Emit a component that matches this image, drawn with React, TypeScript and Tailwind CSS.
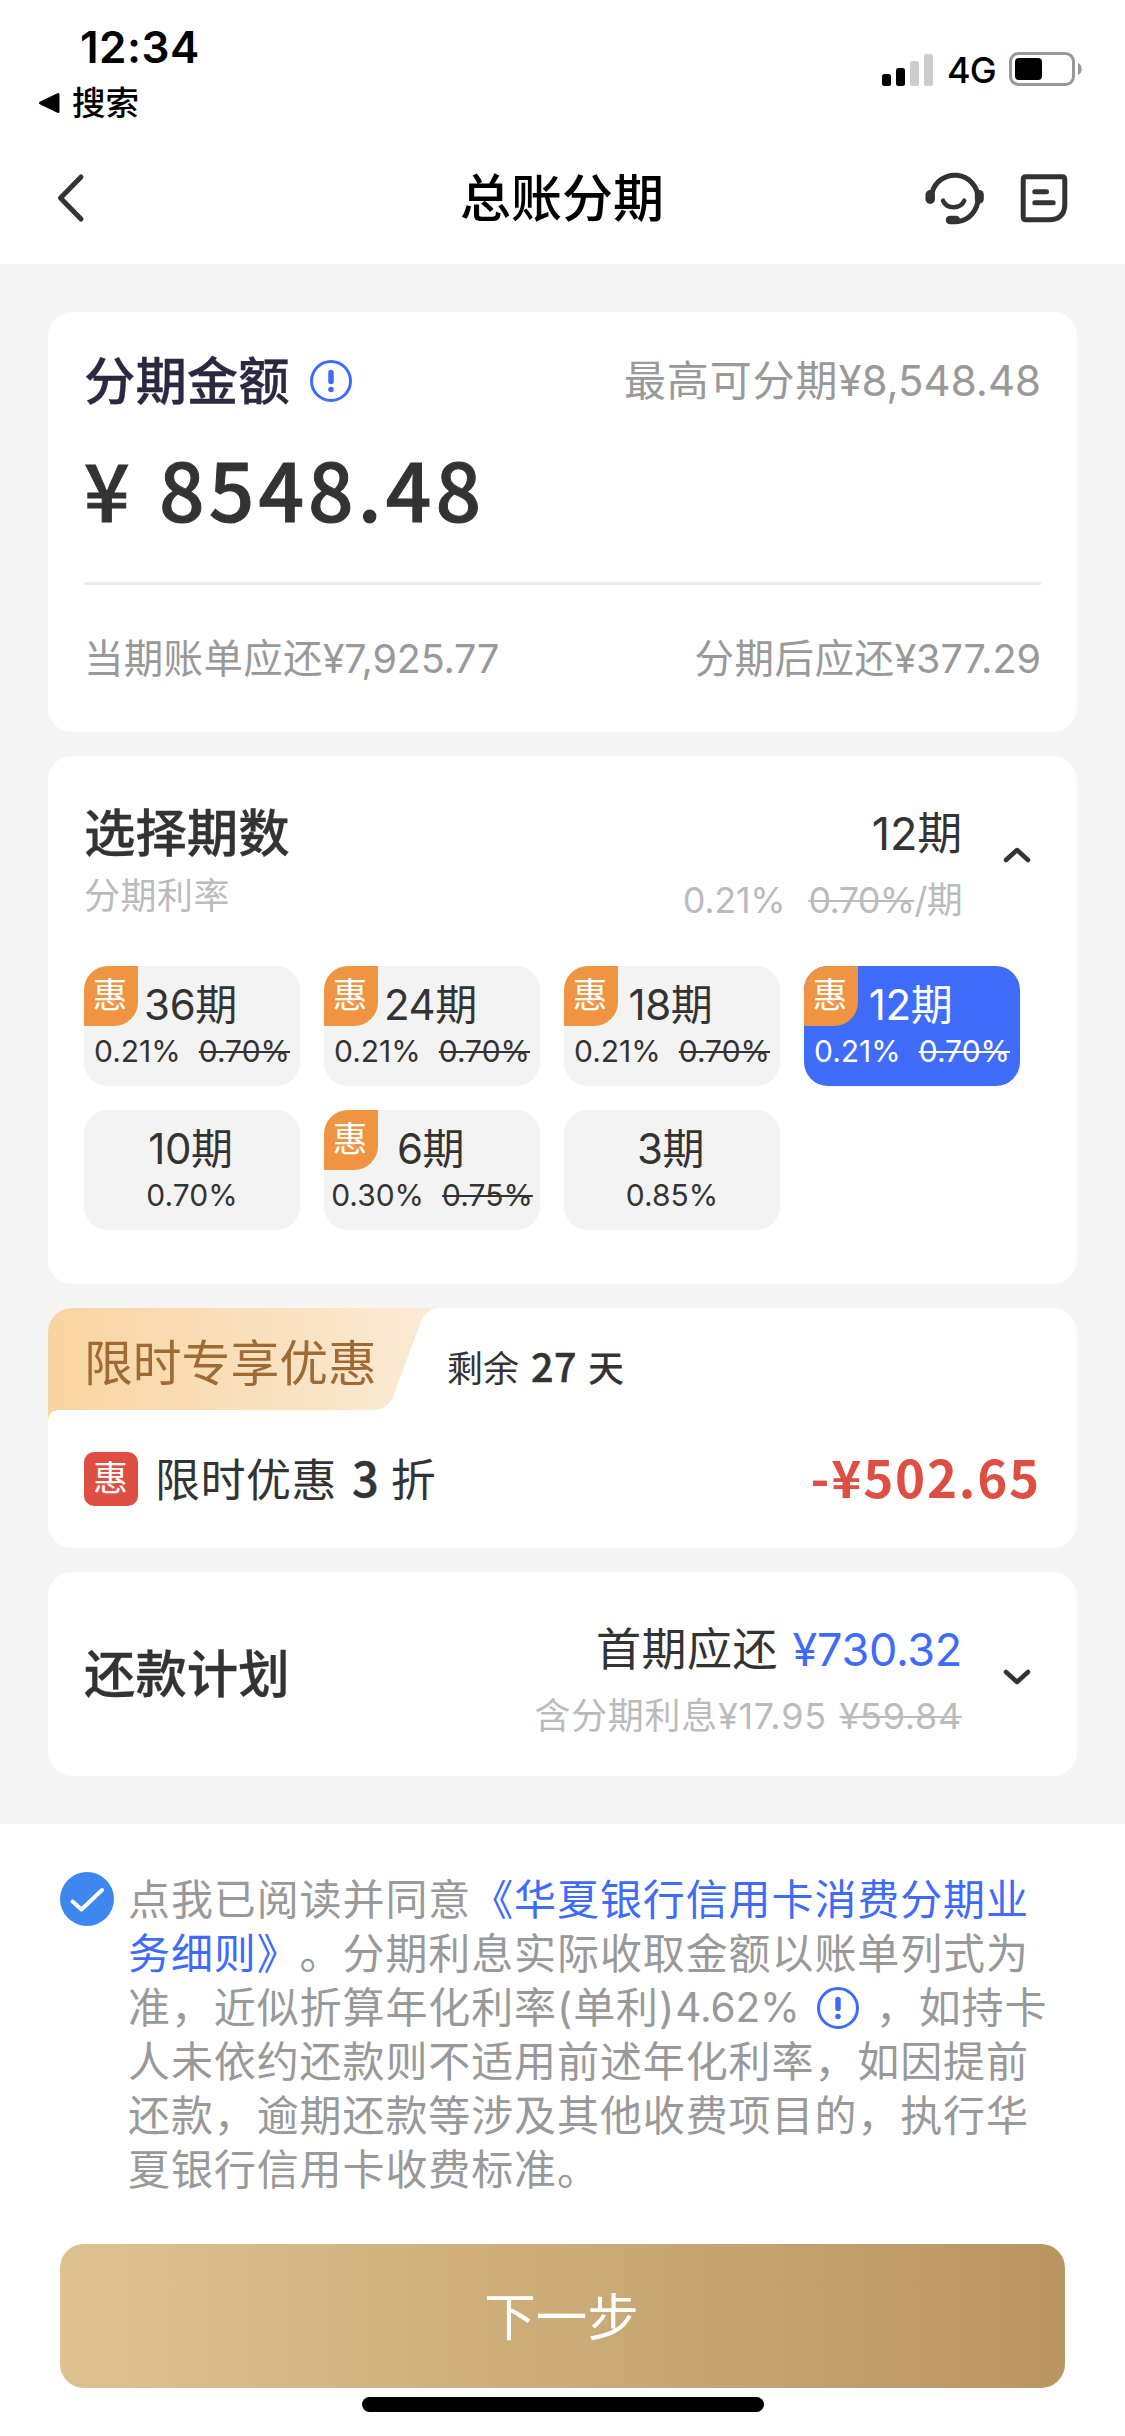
import React from 'react';

type Plan = { term: string; rate: string; was?: string; active?: boolean };

const plans: Plan[] = [
  { term: '36期', rate: '0.21%', was: '0.70%' },
  { term: '24期', rate: '0.21%', was: '0.70%' },
  { term: '18期', rate: '0.21%', was: '0.70%' },
  { term: '12期', rate: '0.21%', was: '0.70%', active: true },
  { term: '10期', rate: '0.70%' },
  { term: '6期', rate: '0.30%', was: '0.75%' },
  { term: '3期', rate: '0.85%' },
];

function StatusBar() {
  return (
    <div className="flex h-[132px] justify-between text-black">
      <div className="pl-[38px] pt-[20px]">
        <div className="pl-[42px] text-[44px] font-semibold leading-[54px] tracking-[0.5px]">12:34</div>
        <div className="mt-[2px] flex h-[54px] items-center gap-[12px] text-[33.5px] font-medium">
          <svg width="22" height="22" viewBox="0 0 22 22">
            <path d="M2.5 11 L20 2.5 V19.5 Z" fill="#000" stroke="#000" strokeWidth="3" strokeLinejoin="round" />
          </svg>
          <span className="leading-[54px]">搜索</span>
        </div>
      </div>
      <div className="mr-[42px] mt-[48px] flex h-[42px] items-center">
        <svg width="52" height="34" viewBox="0 0 52 34">
          <rect x="0" y="22" width="9" height="12" rx="2.5" fill="#000" />
          <rect x="14" y="16" width="9" height="18" rx="2.5" fill="#000" />
          <rect x="28" y="9" width="9" height="25" rx="2.5" fill="#ccc" />
          <rect x="42" y="2" width="9" height="32" rx="2.5" fill="#ccc" />
        </svg>
        <span className="ml-[13px] mt-[2px] w-[49px] text-[36px] font-medium leading-[42px] tracking-[-1px]">4G</span>
        <svg className="ml-[13px]" width="74" height="36" viewBox="0 0 74 36">
          <rect x="1.5" y="2.5" width="63" height="31" rx="8" fill="none" stroke="#999" strokeWidth="3" />
          <rect x="6" y="7" width="27" height="22" rx="4" fill="#000" />
          <path d="M69 12 C74 14 74 22 69 24 Z" fill="#999" />
        </svg>
      </div>
    </div>
  );
}

function NavBar() {
  return (
    <div className="flex h-[132px] items-center justify-between px-[54px]">
      <svg className="mr-[116px]" width="36" height="54" viewBox="0 0 36 54">
        <path d="M27 6 L6.500 27 L27 48" fill="none" stroke="#333" strokeWidth="5" strokeLinecap="round" strokeLinejoin="round" />
      </svg>
      <h1 className="mt-[2px] text-[51px] font-medium leading-[60px] text-black">总账分期</h1>
      <div className="flex items-center gap-[33px]">
        <svg width="66" height="60" viewBox="0 0 66 60" fill="none" stroke="#333" strokeLinecap="round">
          <path d="M14 25 A23.300 23.300 0 1 1 40 53.500" strokeWidth="5" />
          <path d="M12.200 26.800 V31.200" strokeWidth="9.500" />
          <path d="M61.300 26.500 V31" strokeWidth="9" />
          <path d="M25 32.700 C29 41.400 42.500 41.400 46.300 32.700" strokeWidth="4.500" />
          <path d="M32 52 H38" strokeWidth="8.500" />
        </svg>
        <svg width="54" height="60" viewBox="0 0 54 60" fill="none" stroke="#333" strokeLinecap="round" strokeLinejoin="round">
          <path d="M9 8.700 H45 Q47.800 8.700 47.800 11.500 V36 Q47.800 51.800 32 51.800 H9 Q6.200 51.800 6.200 49 V11.500 Q6.200 8.700 9 8.700 Z" strokeWidth="5" />
          <path d="M17.800 23.700 H29.500" strokeWidth="5" />
          <path d="M17.800 34.700 H36.200" strokeWidth="5" />
        </svg>
      </div>
    </div>
  );
}

function InfoIcon({ className = '' }: { className?: string }) {
  return (
    <svg className={className} width="42" height="42" viewBox="0 0 42 42" fill="none">
      <circle cx="21" cy="21" r="19.500" stroke="#3f6bfb" strokeWidth="3" />
      <path d="M21 12.500 V21.500" stroke="#3f6bfb" strokeWidth="5.500" strokeLinecap="round" />
      <circle cx="21" cy="29.500" r="2.800" fill="#3f6bfb" />
    </svg>
  );
}

function Chevron({ up = false }: { up?: boolean }) {
  return (
    <svg width="30" height="18" viewBox="0 0 30 18">
      <path
        d={up ? 'M4 14 L15 4 L26 14' : 'M4 4 L15 14 L26 4'}
        fill="none"
        stroke="#333"
        strokeWidth="4.500"
        strokeLinecap="round"
        strokeLinejoin="round"
      />
    </svg>
  );
}

function AmountCard() {
  return (
    <section className="h-[420px] rounded-[24px] bg-white px-[36px] pt-[39px]">
      <div className="flex h-[60px] items-center justify-between">
        <div className="flex items-center">
          <h2 className="text-[51.400px] font-medium leading-[60px] text-[#2b2840] [-webkit-text-stroke:0.300px]">分期金额</h2>
          <InfoIcon className="ml-[20px]" />
        </div>
        <span className="text-[42px] leading-[60px] text-[#999]">
          <span className="tracking-[0.900px]">最高可分期</span>¥8,548.48
        </span>
      </div>
      <div className="mt-[26px] flex h-[100px] items-center text-[80px] font-medium leading-[100px] text-[#333] [-webkit-text-stroke:1px] [font-family:'Noto_Sans_CJK_SC',sans-serif]">
        <span className="w-[75px]">¥</span>
        <span className="tracking-[4.100px]">8548.48</span>
      </div>
      <div className="mt-[45px] h-[3px] bg-[#ebebeb]" />
      <div className="mt-[44px] flex justify-between text-[39.500px] leading-[60px] text-[#999]">
        <span>
          <span className="tracking-[0.300px]">当期账单应还</span>
          <span className="tracking-[-0.200px]">¥7,925.77</span>
        </span>
        <span>
          <span className="tracking-[0.500px]">分期后应还</span>¥377.29
        </span>
      </div>
    </section>
  );
}

function PlanTile({ plan }: { plan: Plan }) {
  return (
    <div
      className={`relative flex h-[120px] w-[216px] flex-col items-center overflow-hidden rounded-[24px] ${
        plan.active ? 'bg-[#3f6cf9] text-white' : 'bg-[#f3f3f3] text-[#333]'
      }`}
    >
      {plan.was && (
        <span className="absolute left-0 top-0 h-[60px] w-[54px] rounded-br-[24px] bg-[#ef9440] pr-[2px] text-center text-[35px] leading-[58px] text-white">
          惠
        </span>
      )}
      <div className="mt-[12px] pr-[3px] text-[42px] leading-[54px] tracking-[-0.400px]">{plan.term}</div>
      <div className="mt-[-2px] flex gap-[18px] whitespace-nowrap text-[30px] leading-[42px]">
        <span>{plan.rate}</span>
        {plan.was && <span className="line-through decoration-2">{plan.was}</span>}
      </div>
    </div>
  );
}

function TermCard() {
  return (
    <section className="h-[528px] rounded-[24px] bg-white px-[36px]">
      <div className="flex h-[210px] justify-between">
        <div className="pt-[47px]">
          <h2 className="text-[51.400px] font-medium leading-[60px] text-[#333] [-webkit-text-stroke:0.300px]">选择期数</h2>
          <p className="mt-[3px] text-[36px] leading-[60px] tracking-[0.500px] text-[#bbb]">分期利率</p>
        </div>
        <div className="flex">
          <div className="pt-[48px] text-right">
            <p className="text-[45px] leading-[60px] tracking-[-0.200px] text-[#333]">12期</p>
            <p className="mt-[6px] flex justify-end gap-[23px] text-[36px] leading-[60px] tracking-[-0.700px] text-[#bbb]">
              <span className="tracking-[-0.300px]">0.21%</span>
              <span>
                <span className="line-through decoration-2">0.70%</span>/期
              </span>
            </p>
          </div>
          <div className="ml-[40px] mr-[9px] pt-[90px]">
            <Chevron up />
          </div>
        </div>
      </div>
      <div className="flex flex-wrap gap-[24px]">
        {plans.map((p) => (
          <PlanTile key={p.term} plan={p} />
        ))}
      </div>
    </section>
  );
}

function OfferCard() {
  return (
    <section className="relative h-[240px] overflow-hidden rounded-[24px] bg-white">
      <svg className="absolute left-0 top-0" width="400" height="120" viewBox="0 0 400 120">
        <defs>
          <linearGradient id="ribbon" x1="0" y1="0" x2="1" y2="0">
            <stop offset="0" stopColor="#f8d4a0" />
            <stop offset="1" stopColor="#fbebd6" />
          </linearGradient>
        </defs>
        <path
          d="M0 0 H392 C381 0 376 6 372.500 15 L345 89 Q339 102 324 102 H12 Q0 102 0 114 Z"
          fill="url(#ribbon)"
        />
      </svg>
      <div className="relative flex h-[102px] items-center pl-[36px]">
        <span className="mt-[9px] w-[363px] text-[48.800px] leading-[72px] text-[#a06a35]">限时专享优惠</span>
        <span className="mt-[15px] flex items-baseline whitespace-nowrap text-[36px] leading-[54px] text-[#333]">
          <span>剩余</span>
          <span className="ml-[12px] text-[39.500px] font-medium tracking-[0.500px] [-webkit-text-stroke:0.500px] [font-family:'Noto_Sans_CJK_SC',sans-serif]">27</span>
          <span className="ml-[11px] font-medium">天</span>
        </span>
      </div>
      <div className="flex h-[138px] items-center justify-between px-[36px]">
        <div className="flex items-center">
          <span className="h-[54px] w-[54px] rounded-[10px] bg-[#df4e42] pr-[1px] text-center text-[35px] leading-[52px] text-white">惠</span>
          <span className="ml-[17px] flex items-baseline text-[45px] leading-[60px] text-[#333]">
            <span className="tracking-[0.500px]">限时优惠</span>
            <span className="mb-[2px] ml-[15px] text-[47px] font-medium leading-[60px] [-webkit-text-stroke:0.500px] [font-family:'Noto_Sans_CJK_SC',sans-serif]">3</span>
            <span className="ml-[12px]">折</span>
          </span>
        </div>
        <span className="mb-[6px] text-[51px] font-bold leading-[60px] tracking-[1.800px] text-[#df4e42] [font-family:'Noto_Sans_CJK_SC',sans-serif]">-¥502.65</span>
      </div>
    </section>
  );
}

function RepaymentCard() {
  return (
    <section className="flex h-[204px] items-center justify-between rounded-[24px] bg-white px-[36px]">
      <h2 className="text-[51.400px] font-medium leading-[60px] text-[#333] [-webkit-text-stroke:0.300px]">还款计划</h2>
      <div className="flex items-center">
        <div className="pt-[17px] text-right">
          <p className="mr-[-1px] text-[45px] leading-[60px] text-[#333]">
            <span className="mr-[2px] tracking-[0.500px]">首期应还</span>{' '}
            <span className="tracking-[-0.300px] text-[#3f6bfb]">¥730.32</span>
          </p>
          <p className="mr-[-1px] mt-[6px] text-[36px] leading-[60px] tracking-[0.700px] text-[#bbb]">
            含分期利息¥17.95 <span className="ml-[2px] line-through decoration-2">¥59.84</span>
          </p>
        </div>
        <div className="ml-[41px] mr-[9px] flex pt-[5px]">
          <Chevron />
        </div>
      </div>
    </section>
  );
}

function Agreement() {
  return (
    <div className="flex pl-[60px]">
      <svg className="shrink-0" width="54" height="54" viewBox="0 0 54 54">
        <circle cx="27" cy="27" r="27" fill="#3e87ef" />
        <path d="M12.500 29.500 L21.500 37.500 L42 18" fill="none" stroke="#fff" strokeWidth="4" strokeLinecap="round" strokeLinejoin="round" />
      </svg>
      <div className="ml-[14px] mt-[1px] whitespace-nowrap text-[42px] leading-[54px] tracking-[0.900px] text-[#999] [text-spacing-trim:space-all]">
        <div>
          点我已阅读并同意<span className="text-[#3f6bfb]">《华夏银行信用卡消费分期业</span>
        </div>
        <div>
          <span className="text-[#3f6bfb]">务细则》</span>。分期利息实际收取金额以账单列式为
        </div>
        <div className="flex h-[54px] items-center">
          <span>准，近似折算年化利率(单利)</span>
          <span className="text-[40.500px]  tracking-[-0.100px]">4.62%</span>
          <InfoIcon className="mx-[17px]" />
          <span>，如持卡</span>
        </div>
        <div>人未依约还款则不适用前述年化利率，如因提前</div>
        <div>还款，逾期还款等涉及其他收费项目的，执行华</div>
        <div>夏银行信用卡收费标准。</div>
      </div>
    </div>
  );
}

export default function App() {
  return (
    <div
      lang="zh-CN"
      className="flex h-[2436px] w-[1125px] flex-col overflow-hidden bg-white [font-family:'Inter','Noto_Sans_CJK_SC',sans-serif]"
    >
      <header>
        <StatusBar />
        <NavBar />
      </header>
      <main className="flex h-[1560px] flex-col gap-[24px] bg-[#f5f5f5] px-[48px] pt-[48px]">
        <AmountCard />
        <TermCard />
        <OfferCard />
        <RepaymentCard />
      </main>
      <footer className="flex flex-col pt-[48px]">
        <Agreement />
        <button className="mx-[60px] mt-[47px] h-[144px] rounded-[24px] bg-linear-to-r from-[#ddc28f] to-[#b99561] pr-[2px] pt-[2px] text-[51.500px] leading-[142px] text-white">
          下一步
        </button>
        <div className="mx-auto mt-[9px] h-[15px] w-[402px] rounded-full bg-black" />
      </footer>
    </div>
  );
}
